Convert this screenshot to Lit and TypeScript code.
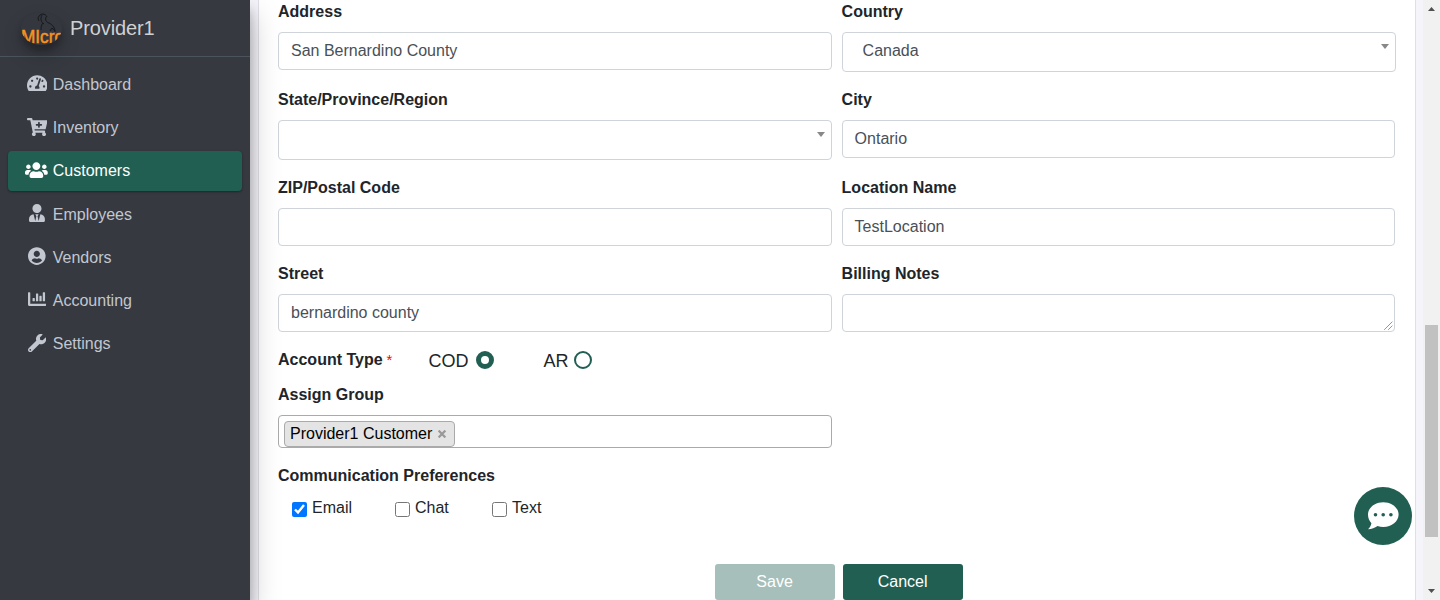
import { LitElement, html, css, svg } from "lit";
import { customElement, property } from "lit/decorators.js";
import { classMap } from "lit/directives/class-map.js";

interface NavEntry {
  label: string;
  w: number;
  path: string;
  active?: boolean;
}

const NAV: NavEntry[] = [
  {
    label: "Dashboard",
    w: 576,
    path: "M288 32C128.94 32 0 160.94 0 320c0 52.8 14.25 102.26 39.06 144.8 5.61 9.62 16.3 15.2 27.44 15.2h443c11.14 0 21.83-5.58 27.44-15.2C561.75 422.26 576 372.8 576 320c0-159.06-128.94-288-288-288zm0 64c14.71 0 26.58 10.13 30.32 23.65-1.11 2.26-2.64 4.23-3.45 6.67l-9.22 27.67c-5.13 3.49-10.97 6.01-17.64 6.01-17.67 0-32-14.33-32-32S270.33 96 288 96zM96 384c-17.67 0-32-14.33-32-32s14.33-32 32-32 32 14.33 32 32-14.33 32-32 32zm48-160c-17.67 0-32-14.33-32-32s14.33-32 32-32 32 14.33 32 32-14.33 32-32 32zm246.77-72.41l-61.33 184C343.13 347.33 352 364.54 352 384c0 11.72-3.38 22.55-8.88 32H232.88c-5.5-9.45-8.88-20.28-8.88-32 0-33.94 26.5-61.43 59.9-63.59l61.34-184.01c4.17-12.56 17.73-19.45 30.36-15.17 12.57 4.19 19.35 17.79 15.17 30.36zm14.66 57.2l15.52-46.55c3.47-1.29 7.13-2.23 11.05-2.23 17.67 0 32 14.33 32 32s-14.33 32-32 32c-11.38-.01-20.89-6.28-26.57-15.22zM480 384c-17.67 0-32-14.33-32-32s14.33-32 32-32 32 14.33 32 32-14.33 32-32 32z",
  },
  {
    label: "Inventory",
    w: 576,
    path: "M504.717 320H211.572l6.545 32h268.418c15.401 0 26.816 14.301 23.403 29.319l-5.517 24.276C523.112 414.668 536 433.828 536 456c0 31.202-25.519 56.444-56.824 55.994-29.823-.429-54.35-24.631-55.155-54.447-.44-16.287 6.085-31.049 16.803-41.548H231.176C241.553 426.165 248 440.326 248 456c0 31.813-26.528 57.431-58.67 55.938-28.54-1.325-51.751-24.385-53.251-52.917-1.158-22.034 10.436-41.455 28.051-51.586L93.883 64H24C10.745 64 0 53.255 0 40V24C0 10.745 10.745 0 24 0h102.529c11.401 0 21.228 8.021 23.513 19.19L159.208 64H551.99c15.401 0 26.816 14.301 23.403 29.319l-47.273 208C525.637 312.246 515.923 320 504.717 320zM408 168h-48v-40c0-8.837-7.163-16-16-16h-16c-8.837 0-16 7.163-16 16v40h-48c-8.837 0-16 7.163-16 16v16c0 8.837 7.163 16 16 16h48v40c0 8.837 7.163 16 16 16h16c8.837 0 16-7.163 16-16v-40h48c8.837 0 16-7.163 16-16v-16c0-8.837-7.163-16-16-16z",
  },
  {
    label: "Customers",
    w: 640,
    active: true,
    path: "M96 224c35.3 0 64-28.7 64-64s-28.7-64-64-64-64 28.7-64 64 28.7 64 64 64zm448 0c35.3 0 64-28.7 64-64s-28.7-64-64-64-64 28.7-64 64 28.7 64 64 64zm32 32h-64c-17.6 0-33.5 7.1-45.1 18.6 40.3 22.1 68.9 62 75.1 109.4h66c17.7 0 32-14.3 32-32v-32c0-35.3-28.7-64-64-64zm-256 0c61.9 0 112-50.1 112-112S381.9 32 320 32 208 82.1 208 144s50.1 112 112 112zm76.8 32h-8.3c-20.8 10-43.9 16-68.5 16s-47.6-6-68.5-16h-8.3C179.6 288 128 339.6 128 403.2V432c0 26.5 21.5 48 48 48h288c26.5 0 48-21.5 48-48v-28.8c0-63.6-51.6-115.2-115.2-115.2zm-223.7-13.4C161.5 263.1 145.6 256 128 256H64c-35.3 0-64 28.7-64 64v32c0 17.7 14.3 32 32 32h65.9c6.3-47.4 34.9-87.3 75.2-109.4z",
  },
  {
    label: "Employees",
    w: 448,
    path: "M224 256c70.7 0 128-57.3 128-128S294.7 0 224 0 96 57.3 96 128s57.3 128 128 128zm95.8 32.6L272 480l-32-136 32-56h-96l32 56-32 136-47.8-191.4C56.9 292 0 350.3 0 422.4V464c0 26.5 21.5 48 48 48h352c26.5 0 48-21.5 48-48v-41.6c0-72.1-56.9-130.4-128.2-133.8z",
  },
  {
    label: "Vendors",
    w: 496,
    path: "M248 8C111 8 0 119 0 256s111 248 248 248 248-111 248-248S385 8 248 8zm0 96c48.6 0 88 39.4 88 88s-39.4 88-88 88-88-39.4-88-88 39.4-88 88-88zm0 344c-58.7 0-111.3-26.6-146.5-68.2 18.8-35.4 55.6-59.8 98.5-59.8 2.4 0 4.8.4 7.1 1.1 13 4.2 26.6 6.9 40.9 6.9 14.3 0 28-2.7 40.9-6.9 2.3-.7 4.7-1.1 7.1-1.1 42.9 0 79.7 24.4 98.5 59.8C359.3 421.4 306.7 448 248 448z",
  },
  {
    label: "Accounting",
    w: 512,
    path: "M332.8 320h38.4c6.4 0 12.8-6.4 12.8-12.8V172.8c0-6.4-6.4-12.8-12.8-12.8h-38.4c-6.4 0-12.8 6.4-12.8 12.8v134.4c0 6.4 6.4 12.8 12.8 12.8zm96 0h38.4c6.4 0 12.8-6.4 12.8-12.8V76.8c0-6.4-6.4-12.8-12.8-12.8h-38.4c-6.4 0-12.8 6.4-12.8 12.8v230.4c0 6.4 6.4 12.8 12.8 12.8zm-288 0h38.4c6.4 0 12.8-6.4 12.8-12.8v-70.4c0-6.4-6.4-12.8-12.8-12.8h-38.4c-6.4 0-12.8 6.4-12.8 12.8v70.4c0 6.4 6.4 12.8 12.8 12.8zm96 0h38.4c6.4 0 12.8-6.4 12.8-12.8V108.8c0-6.4-6.4-12.8-12.8-12.8h-38.4c-6.4 0-12.8 6.4-12.8 12.8v198.4c0 6.4 6.4 12.8 12.8 12.8zM496 384H64V80c0-8.84-7.16-16-16-16H16C7.16 64 0 71.16 0 80v336c0 17.67 14.33 32 32 32h464c8.84 0 16-7.16 16-16v-32c0-8.84-7.16-16-16-16z",
  },
  {
    label: "Settings",
    w: 512,
    path: "M507.73 109.1c-2.24-9.03-13.54-12.09-20.12-5.51l-74.36 74.36-67.88-11.31-11.31-67.88 74.36-74.36c6.62-6.62 3.43-17.9-5.66-20.16-47.38-11.74-99.55.91-136.58 37.93-39.64 39.64-50.55 97.1-34.05 147.2L18.74 402.76c-24.99 24.99-24.99 65.51 0 90.5 24.99 24.99 65.51 24.99 90.5 0l213.21-213.21c50.12 16.71 107.47 5.68 147.37-34.22 37.07-37.07 49.7-89.32 37.91-136.73zM64 472c-13.25 0-24-10.75-24-24 0-13.26 10.75-24 24-24s24 10.74 24 24c0 13.25-10.75 24-24 24z",
  },
];

@customElement("side-nav")
class SideNav extends LitElement {
  static styles = css`
    :host {
      display: flex;
      flex-direction: column;
      background: #363940;
      color: #c2c7d0;
      box-shadow: 0 14px 28px rgba(0, 0, 0, 0.25), 0 10px 10px rgba(0, 0, 0, 0.22);
    }
    .brand {
      display: flex;
      align-items: center;
      height: 56px;
      padding-left: 21px;
      border-bottom: 1px solid #4b545c;
      color: #d0d1d3;
      font-size: 20px;
      letter-spacing: -0.12px;
    }
    .logo {
      width: 41px;
      height: 33px;
      margin-right: 8px;
      border-radius: 50%;
      box-shadow: 0 10px 20px rgba(0, 0, 0, 0.19), 0 6px 6px rgba(0, 0, 0, 0.23);
    }
    .word {
      font: 18px "Liberation Sans", Arial, sans-serif;
      letter-spacing: 0;
      fill: #f7931e;
      stroke: #f7931e;
      stroke-width: 0.5;
    }
    .menu {
      display: flex;
      flex-direction: column;
      gap: 3.2px;
      padding: 7.6px 8px;
    }
    .item {
      display: flex;
      align-items: center;
      box-sizing: border-box;
      height: 40px;
      padding: 0.8px 0 0 16px;
      border-radius: 4px;
      line-height: 24px;
    }
    .active {
      background: #205f52;
      color: #fff;
      box-shadow: 0 1px 3px rgba(0, 0, 0, 0.12), 0 1px 2px rgba(0, 0, 0, 0.24);
    }
    .glyph {
      display: flex;
      justify-content: center;
      width: 25.6px;
      margin-right: 3.2px;
      padding-bottom: 3px;
    }
    .glyph svg {
      flex: none;
      height: 18.2px;
      fill: currentColor;
    }
  `;

  render() {
    return html`
      <div class="brand">
        <svg class="logo" viewBox="0 0 41 33">
          <defs><clipPath id="round"><ellipse cx="20.5" cy="16.5" rx="20.5" ry="16.5" /></clipPath></defs>
          <g clip-path="url(#round)">
            <rect width="41" height="33" fill="#34373d" />
            <path
              d="M18 9c-2-3 0-6 3-7 3 0 4 1 5 3M21 3c-2 4-1 7 2 9M25 5c-1 3 0 5 3 6 4 2 6 5 6 9M22 11c-2 2-2 5-2 7M29 19l2-3 3 3"
              fill="none"
              stroke="#17191c"
              stroke-width="1"
            />
            <text class="word" x="0" y="30.500" textLength="43" lengthAdjust="spacingAndGlyphs">MIcro</text>
          </g>
        </svg>
        <span>Provider1</span>
      </div>
      <nav class="menu">
        ${NAV.map(
          (n) => html`<a class=${classMap({ item: true, active: !!n.active })}>
            <span class="glyph"><svg viewBox="0 0 ${n.w} 512">${svg`<path d=${n.path} />`}</svg></span>
            <span>${n.label}</span>
          </a>`
        )}
      </nav>
    `;
  }
}

@customElement("form-field")
class FormField extends LitElement {
  @property() label = "";
  @property() value = "";
  @property() kind = "input";

  static styles = css`
    :host {
      display: block;
    }
    .label {
      margin-bottom: 8px;
      line-height: 24px;
      font-weight: 700;
    }
    .box {
      display: flex;
      box-sizing: border-box;
      height: 38px;
      padding: 0 12px;
      border: 1px solid #ced4da;
      border-radius: 4px;
      background: #fff;
      color: #495057;
      line-height: 36px;
    }
    .select {
      height: 40px;
      margin-right: -0.4px;
      padding: 0 6px 0 20px;
      justify-content: space-between;
    }
    .caret {
      width: 0;
      height: 0;
      margin-top: 11px;
      border: 4px solid transparent;
      border-top: 5px solid #888;
      border-bottom: 0;
    }
    .area {
      justify-content: flex-end;
      align-items: flex-end;
      padding: 0 1px 1px 0;
    }
    .grip {
      width: 9px;
      height: 9px;
      stroke: #555;
      stroke-width: 1;
      stroke-dasharray: 1 0.4;
    }
  `;

  render() {
    return html`
      <div class="label">${this.label}</div>
      <div class=${classMap({ box: true, select: this.kind === "select", area: this.kind === "area" })}>
        <span>${this.value}</span>
        ${this.kind === "select" ? html`<i class="caret"></i>` : ""}
        ${this.kind === "area"
          ? html`<svg class="grip" viewBox="0 0 9 9"><path d="M.5 8.5l8-8M4.5 8.5l4-4" /></svg>`
          : ""}
      </div>
    `;
  }
}

@customElement("app-root")
class AppRoot extends LitElement {
  static styles = css`
    :host {
      display: grid;
      grid-template-columns: 250px 1fr 17px;
      position: relative;
      height: 600px;
      overflow: hidden;
      color: #212529;
      font: 16px/24px "Liberation Sans", Arial, sans-serif;
    }
    side-nav {
      z-index: 1;
    }
    .page {
      padding: 0 7px 0 8px;
      background: #f4f4fa;
    }
    .card {
      display: flex;
      flex-direction: column;
      box-sizing: border-box;
      height: 600px;
      padding: 0 19.8px 0 19px;
      border: solid #dfe0e6;
      border-width: 0 1px;
      background: #fff;
    }
    .fields {
      display: grid;
      grid-template-columns: 1fr 1fr;
      gap: 16px 10px;
    }
    .strong {
      font-weight: 700;
    }
    .account {
      display: flex;
      align-items: center;
      height: 24px;
      margin: 16px 0 11px;
    }
    .star {
      width: 5px;
      margin-left: 4px;
      color: #f00;
      font-size: 15px;
      line-height: 22px;
    }
    .option {
      display: flex;
      align-items: center;
      font-size: 18px;
    }
    .name {
      padding-top: 2px;
    }
    .cod {
      width: 115px;
      margin-left: 36.8px;
      gap: 7.5px;
    }
    .ar {
      gap: 5.5px;
    }
    .radio {
      box-sizing: border-box;
      width: 18px;
      height: 18px;
      border: 2px solid #205f52;
      border-radius: 50%;
    }
    .on {
      border-width: 5px;
    }
    .tags {
      display: flex;
      box-sizing: border-box;
      width: 554px;
      height: 33px;
      margin: 8px 0 16px;
      padding: 5px 5px 0;
      border: 1px solid #aaa;
      border-radius: 4px;
    }
    .tag {
      display: flex;
      align-items: center;
      gap: 5.5px;
      box-sizing: border-box;
      width: 171px;
      height: 26px;
      padding: 0 0 0 5px;
      border: 1px solid #aaa;
      border-radius: 4px;
      background: #e4e4e4;
      color: #000;
    }
    .x {
      width: 8px;
      height: 8px;
      padding-bottom: 1px;
      stroke: #999;
      stroke-width: 2;
    }
    .checks {
      display: flex;
      margin: 8px 0 0 14px;
    }
    .check {
      display: flex;
      gap: 5px;
    }
    .email {
      width: 103px;
    }
    .chat {
      width: 97px;
    }
    .check input {
      width: 15px;
      height: 15px;
      margin: 6px 0 0;
    }
    .actions {
      display: flex;
      justify-content: center;
      gap: 8px;
      margin: 44px 0 0 4px;
    }
    .btn {
      width: 120px;
      height: 36px;
      border-radius: 3px;
      background: #205f52;
      color: #fff;
      line-height: 35px;
      text-align: center;
    }
    .disabled {
      background: #a6bfba;
    }
    .scroll {
      display: flex;
      flex-direction: column;
      align-items: center;
      background: #f1f1f1;
    }
    .arrow {
      width: 7px;
      height: 4px;
      margin-top: 7px;
      fill: #505050;
    }
    .thumb {
      width: 13px;
      height: 212px;
      margin: 314px 0 45px;
      background: #c1c1c1;
    }
    .bubble {
      position: absolute;
      left: 1354px;
      top: 487px;
      width: 58px;
      height: 58px;
      z-index: 2;
    }
  `;

  render() {
    return html`
      <side-nav></side-nav>
      <main class="page">
        <section class="card">
          <div class="fields">
            <form-field label="Address" value="San Bernardino County"></form-field>
            <form-field label="Country" value="Canada" kind="select"></form-field>
            <form-field label="State/Province/Region" kind="select"></form-field>
            <form-field label="City" value="Ontario"></form-field>
            <form-field label="ZIP/Postal Code"></form-field>
            <form-field label="Location Name" value="TestLocation"></form-field>
            <form-field label="Street" value="bernardino county"></form-field>
            <form-field label="Billing Notes" kind="area"></form-field>
          </div>
          <div class="account">
            <span class="strong">Account Type</span><span class="star">*</span>
            <span class="option cod"><span class="name">COD</span><i class="radio on"></i></span>
            <span class="option ar"><span class="name">AR</span><i class="radio"></i></span>
          </div>
          <div class="strong">Assign Group</div>
          <div class="tags">
            <span class="tag">Provider1 Customer<svg class="x" viewBox="0 0 7 7"><path d="M.5.5l6 6M6.500.5l-6 6" /></svg></span>
          </div>
          <div class="strong">Communication Preferences</div>
          <div class="checks">
            <label class="check email"><input type="checkbox" checked />Email</label>
            <label class="check chat"><input type="checkbox" />Chat</label>
            <label class="check"><input type="checkbox" />Text</label>
          </div>
          <div class="actions">
            <div class="btn disabled">Save</div>
            <div class="btn">Cancel</div>
          </div>
        </section>
      </main>
      <div class="scroll">
        <svg class="arrow" viewBox="0 0 7 4"><path d="M0 4L3.5 0L7 4z" /></svg>
        <div class="thumb"></div>
        <svg class="arrow" viewBox="0 0 7 4"><path d="M0 0L3.5 4L7 0z" /></svg>
      </div>
      <svg class="bubble" viewBox="0 0 58 58">
        <circle cx="29" cy="29" r="29" fill="#205f52" />
        <path
          d="M29.300 15.200c8.600 0 15.300 5.500 15.300 12.400S37.900 40 29.300 40c-2 0-4-.3-5.800-.9C20.800 41 17.800 42.200 14 42.200c1.800-1.700 3-3.700 3.400-6C15.200 34 14 31.200 14 27.600c0-6.900 6.700-12.400 15.300-12.400z"
          fill="#fff"
        />
        <g fill="#205f52">
          <circle cx="21.500" cy="27.700" r="1.800" /><circle cx="29.200" cy="27.700" r="1.800" /><circle cx="36.900" cy="27.700" r="1.800" />
        </g>
      </svg>
    `;
  }
}
